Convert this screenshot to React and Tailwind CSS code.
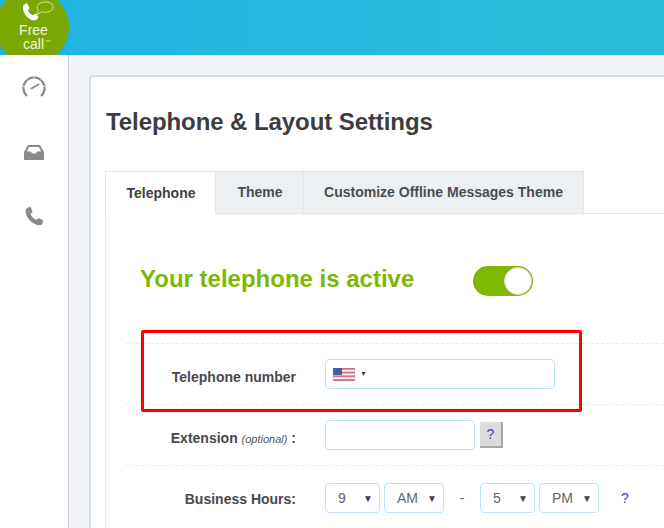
import React from "react";

const sans = "font-['Liberation_Sans',Arial,sans-serif]";

function Select({ value, width }) {
  return (
    <div className={`${width} h-[30px] shrink-0 border border-[#bfe3fb] rounded-[4px] bg-white flex items-center justify-between pl-3 pr-[6px] text-[14px] text-[#62666e]`}>
      <span>{value}</span>
      <span className="text-[10px] text-[#3f4350]">▼</span>
    </div>
  );
}

function Dash() {
  return <div className="border-t border-dashed border-[#e8ecef] h-0" />;
}

export default function App() {
  return (
    <div className={`${sans} relative w-[664px] h-[528px] overflow-hidden bg-[#f3f5fa] flex flex-col`}>
      <header className="h-[55px] shrink-0 bg-gradient-to-r from-[#1fb3e4] to-[#2cbcd9] relative overflow-hidden">
        <div className="absolute left-[-5px] top-[-10px] w-[74px] h-[74px] rounded-full bg-[#7aa800] text-white text-center">
          <svg className="absolute left-[28px] top-[11px]" width="34" height="20" viewBox="0 0 34 20" fill="none">
            <path transform="translate(-1 1)" d="M1.5 3 L5 1 L7.5 6 L6 8.2 C6.8 10.5 8.8 12.6 11 13.4 L13 11.6 L16.5 14.6 L15 17.4 C12.5 19.2 9 18.4 6 15.8 C2 12.4 -0.2 6.4 1.5 3 Z" fill="#fff" />
            <path transform="translate(-3 0)" d="M22 1.5 C27 0.2 33 1.4 33 6 C33 10.5 26.5 12 22 10.8 L16.5 14 L18.5 9.5 C15.5 6 17.5 2.8 22 1.5 Z" stroke="#e8f0c8" strokeWidth="0.8" />
          </svg>
          <div className="absolute left-[3px] right-0 top-[33px] text-[14px] leading-[14px] text-[#f1f6dc]">Free<br />call</div>
          <span className="absolute left-[51px] top-[48px] text-[4px] leading-[5px] text-[#e6efc4]">inc</span>
        </div>
      </header>

      <div className="flex flex-1 min-h-0">
        <aside className="w-[69px] shrink-0 bg-white border-r border-[#c9cbce] flex flex-col items-center pr-[1px]">
          <svg className="mt-[20px] ml-[1px]" width="24" height="23" viewBox="0 0 24 23" fill="none" stroke="#8a8a8a">
            <path d="M5 21 A10.6 10.6 0 1 1 19 21" strokeWidth="2.2" />
            <path d="M12 0 V3 M1 11.5 H3.5 M20.5 11.5 H23 M4 3.5 L6 5.5 M20 3.5 L18 5.5" stroke="#fff" strokeWidth="0.8" />
            <path d="M9.5 13.5 L16.5 9.5" strokeWidth="2" strokeLinecap="round" />
          </svg>
          <svg className="mt-[47px]" width="20" height="15" viewBox="0 0 20 15" fill="#8a8a8a">
            <path d="M4 0 H16 L20 7 V15 H0 V7 Z M5 2 L3 6.5 H7 L8 8.5 H12 L13 6.5 H17 L15 2 Z" fillRule="evenodd" />
          </svg>
          <svg className="mt-[47px] ml-[1px]" width="19" height="19" viewBox="0 0 20 20" fill="#8a8a8a">
            <path d="M3 .6 L6 0 L8 5 L6 7.3 C7 10 9 12.2 12 13.4 L14.4 11.5 L19 14 L18.5 17 C17.5 19.5 14 20 10.5 18 C5 15.5 1 10 .6 5 C.4 3 1.5 1.4 3 .6 Z" />
          </svg>
        </aside>

        <main className="flex-1 min-w-0 pt-[20px] pl-[20px]">
          <section className="h-[600px] bg-white border-l-2 border-t-2 border-[#d3dee5] rounded-tl-[4px] pl-[14px] pt-[26px]">
            <h1 className="text-[24px] leading-[36px] font-bold text-[#3d3d3f] tracking-[-0.08px] mt-[1px] ml-[1px]">Telephone &amp; Layout Settings</h1>

            <div className="mt-[31px] flex h-[43px] text-[14px] font-bold text-[#4a4c50] relative">
              <div className="absolute left-[110px] right-0 bottom-0 border-b border-[#dfe5e8]" />
              <div className="relative w-[111px] flex items-center justify-center pl-[1px] bg-white border border-b-0 border-[#dfe5e8] text-[#3d3f43]">Telephone</div>
              <div className="relative w-[88px] flex items-center justify-center pl-[1px] bg-[#edf0f2] border-y border-r border-[#dfe5e8]">Theme</div>
              <div className="relative w-[280px] flex items-center justify-center bg-[#edf0f2] border-y border-r border-[#dfe5e8]">Customize Offline Messages Theme</div>
            </div>

            <div className="border-l border-[#e3f0f0] pl-[20px] h-[400px]">
              <div className="pl-[14px] pt-[51px] h-[82px] flex items-center gap-[59px]">
                <h2 className="text-[24px] font-bold leading-[30px] text-[#7cb800] mb-[4px]">Your telephone is active</h2>
                <div className="w-[60px] h-[30px] rounded-full bg-[#7fb800] relative shrink-0">
                  <div className="absolute right-[1px] top-[1px] w-[28px] h-[28px] rounded-full bg-white border border-[#d8dcc8]" />
                </div>
              </div>

              <div className="mt-[47px]"><Dash /></div>
              <div className="h-[60px] flex items-center">
                <div className="w-[170px] text-right text-[14px] font-bold text-[#47494d] mt-[6px]">Telephone number</div>
                <div className="ml-[29px] w-[230px] h-[30px] border border-[#bfe3fb] rounded-[4px] bg-white flex items-center pl-[7px] gap-[5px]">
                  <svg width="22" height="13" viewBox="0 0 22 13">
                    <rect width="22" height="13" fill="#f4f2f4" />
                    <rect y="0" width="22" height="1.8" fill="#d0737f" />
                    <rect y="3.7" width="22" height="1.8" fill="#d0737f" />
                    <rect y="7.4" width="22" height="1.8" fill="#d0737f" />
                    <rect y="11.1" width="22" height="1.9" fill="#d0737f" />
                    <rect width="9" height="7" fill="#4e5a90" />
                  </svg>
                  <span className="text-[7px] text-[#444]">▼</span>
                </div>
              </div>
              <Dash />
              <div className="h-[60px] flex items-center">
                <div className="w-[170px] text-right text-[14px] font-bold text-[#47494d] mt-[6px]">
                  Extension <i className="font-normal text-[11px] text-[#555]">(optional)</i> :
                </div>
                <div className="ml-[29px] w-[150px] h-[30px] border border-[#bfe3fb] rounded-[4px] bg-white" />
                <div className="ml-[5px] w-[23px] h-[26px] bg-[#dcdcdc] border-r-2 border-b-2 border-[#a9a9a9] flex items-center justify-center text-[14px] font-normal text-[#3f3fd0]">?</div>
              </div>
              <Dash />
              <div className="h-[64px] flex items-center text-[14px]">
                <div className="w-[170px] text-right font-bold text-[#47494d] mt-[2px]">Business Hours:</div>
                <div className="ml-[29px] flex items-center">
                  <Select value="9" width="w-[55px]" />
                  <div className="ml-[4px]"><Select value="AM" width="w-[60px]" /></div>
                  <span className="w-[36px] text-center text-[#5b5f66]">-</span>
                  <Select value="5" width="w-[55px]" />
                  <div className="ml-[4px]"><Select value="PM" width="w-[60px]" /></div>
                  <span className="ml-[22px] text-[#4a3fd0] text-[14px]">?</span>
                </div>
              </div>
            </div>
          </section>
        </main>
      </div>

      <div className="absolute left-[141px] top-[330px] w-[441px] h-[82px] border-[3px] border-[#ff0000] rounded-[2px] pointer-events-none" />
    </div>
  );
}
